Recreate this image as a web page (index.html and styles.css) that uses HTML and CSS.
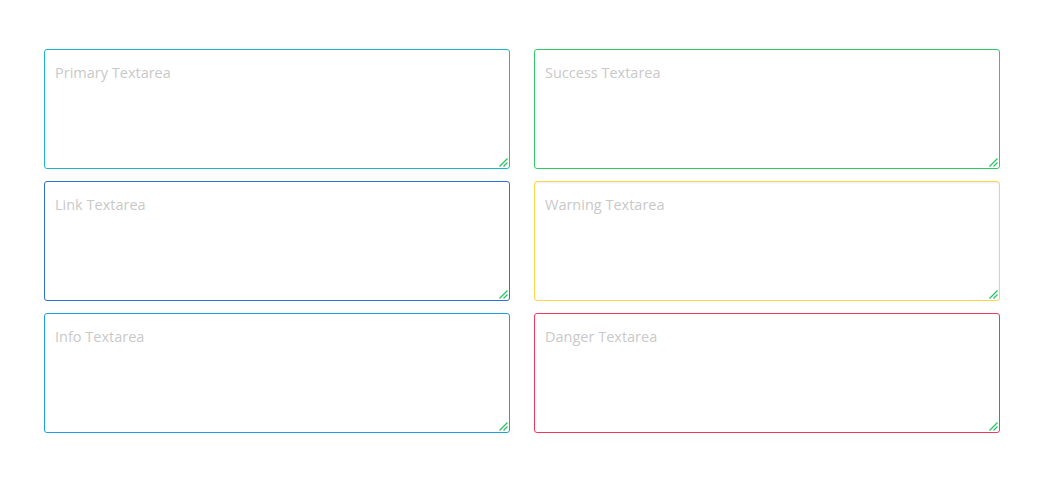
FILE: index.html
```html
<!DOCTYPE html>
<html>
<head>
<meta charset="utf-8">
<link rel="stylesheet" href="styles.css">
</head>
<body>
<div class="grid">
  <div class="field"><textarea class="ta primary" placeholder="Primary Textarea"></textarea><svg class="grip" width="9" height="9" viewBox="0 0 9 9"><path d="M0.5 8.5 L8.5 0.5 M4.5 8.5 L8.5 4.5" stroke="#22c55e" stroke-width="1.2"/></svg></div>
  <div class="field"><textarea class="ta success" placeholder="Success Textarea"></textarea><svg class="grip" width="9" height="9" viewBox="0 0 9 9"><path d="M0.5 8.5 L8.5 0.5 M4.5 8.5 L8.5 4.5" stroke="#22c55e" stroke-width="1.2"/></svg></div>
  <div class="field"><textarea class="ta link" placeholder="Link Textarea"></textarea><svg class="grip" width="9" height="9" viewBox="0 0 9 9"><path d="M0.5 8.5 L8.5 0.5 M4.5 8.5 L8.5 4.5" stroke="#22c55e" stroke-width="1.2"/></svg></div>
  <div class="field"><textarea class="ta warning" placeholder="Warning Textarea"></textarea><svg class="grip" width="9" height="9" viewBox="0 0 9 9"><path d="M0.5 8.5 L8.5 0.5 M4.5 8.5 L8.5 4.5" stroke="#22c55e" stroke-width="1.2"/></svg></div>
  <div class="field"><textarea class="ta info" placeholder="Info Textarea"></textarea><svg class="grip" width="9" height="9" viewBox="0 0 9 9"><path d="M0.5 8.5 L8.5 0.5 M4.5 8.5 L8.5 4.5" stroke="#22c55e" stroke-width="1.2"/></svg></div>
  <div class="field"><textarea class="ta danger" placeholder="Danger Textarea"></textarea><svg class="grip" width="9" height="9" viewBox="0 0 9 9"><path d="M0.5 8.5 L8.5 0.5 M4.5 8.5 L8.5 4.5" stroke="#22c55e" stroke-width="1.2"/></svg></div>
</div>
</body>
</html>
```
FILE: styles.css
```css
html, body {
  margin: 0;
  background: #ffffff;
}
body {
  padding: 49px 50px 0 44px;
  font-family: "Open Sans", "Noto Sans", sans-serif;
}
.grid {
  display: grid;
  grid-template-columns: 466px 466px;
  column-gap: 24px;
  row-gap: 12px;
}
.field {
  position: relative;
  height: 120px;
}
.ta {
  display: block;
  box-sizing: border-box;
  width: 100%;
  height: 120px;
  margin: 0;
  padding: 12px 10px;
  border: 1px solid #ccc;
  border-radius: 3px;
  resize: none;
  outline: none;
  background: #fff;
  font-family: "Open Sans", "Noto Sans", sans-serif;
  font-size: 14.5px;
  line-height: 22px;
  color: #333;
}
.ta::placeholder {
  color: #c9c9c9;
}
.primary { border-color: #1cb5cf; }
.success { border-color: #2ccb63; }
.link { border-color: #2f6fdc; }
.warning { border-color: #fdd54a; box-shadow: inset 0 1px 2px rgba(0,0,0,0.08); }
.info { border-color: #1c9ee0; }
.danger { border-color: #f0385c; }
.grip {
  position: absolute;
  right: 2px;
  bottom: 2px;
}
```
